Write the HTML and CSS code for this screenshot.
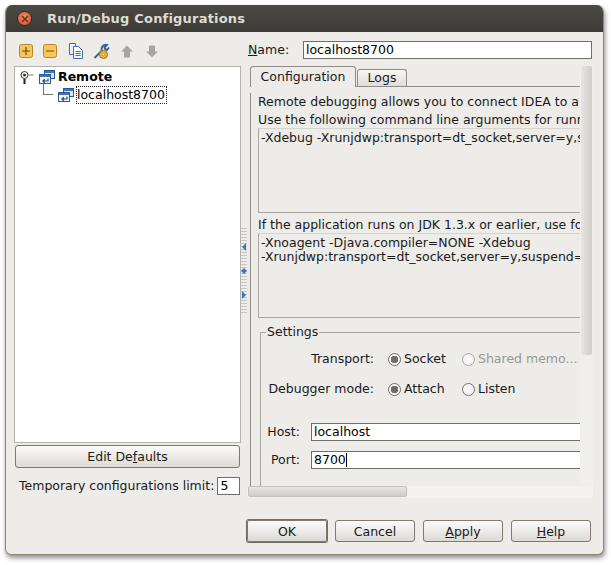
FILE: index.html
```html
<!DOCTYPE html>
<html lang="en">
<head>
    <meta charset="UTF-8">
    <title>Run/Debug Configurations</title>
    <link rel="stylesheet" href="styles.css">
</head>
<body>
    <svg class="defs" width="0" height="0">
        <symbol id="remoteIcon" viewBox="0 0 16 14">
            <rect x="5.5" y="0.5" width="10" height="8" fill="#dbe7f5" stroke="#2a5a94"/>
            <rect x="6" y="1" width="9" height="2" fill="#3f74b5"/>
            <rect x="0.5" y="4.5" width="11" height="9" fill="#f4f8fc" stroke="#2a5a94"/>
            <rect x="1" y="5" width="10" height="2" fill="#3f74b5"/>
            <path d="M9 8.500v2.500H4M5.800 9.200L3.800 11l2 1.800" fill="none" stroke="#1f4f8a" stroke-width="1.200"/>
        </symbol>
    </svg>

    <div class="window">
        <div class="titlebar">
            <span class="close-btn"><svg width="8" height="8" viewBox="0 0 8 8"><path d="M1 1l6 6M7 1l-6 6" stroke="#6b3020" stroke-width="1.500"/></svg></span>
            <span class="title">Run/Debug Configurations</span>
        </div>

        <div class="content">
            <div class="left-col">
                <div class="toolbar">
                    <svg width="14" height="14" viewBox="0 0 14 14"><rect x="0.500" y="0.500" width="13" height="13" rx="2" fill="#f6c65c" stroke="#b9852c"/><path d="M3 7h8M7 3v8" stroke="#6e4a10" stroke-width="1.200"/></svg>
                    <svg width="14" height="14" viewBox="0 0 14 14"><rect x="0.500" y="0.500" width="13" height="13" rx="2" fill="#f6c65c" stroke="#b9852c"/><path d="M3 7h8" stroke="#6e4a10" stroke-width="1.200"/></svg>
                    <svg class="tool-copy" width="14" height="16" viewBox="0 0 14 16"><path d="M0.500 0.500h6v11h-6z" fill="#e8f0f8" stroke="#3f6ea8"/><path d="M4.500 3.500h5l4 4v8h-9z" fill="#f7fafd" stroke="#3f6ea8"/><path d="M6.500 8.500h5M6.500 10.500h5M6.500 12.500h5" stroke="#3f6ea8"/></svg>
                    <svg width="17" height="17" viewBox="0 0 17 17"><path d="M1.500 15L9 7.500a4 4 0 0 1 5-5.500l-2.500 2.500.8 1.700 1.700.8L16 4.500" fill="none" stroke="#39659c" stroke-width="2"/><circle cx="10.500" cy="11.500" r="4" fill="#f1bb2e" stroke="#9c7313"/><circle cx="10.500" cy="11.500" r="1.300" fill="#fff6d0" stroke="#9c7313" stroke-width="0.600"/></svg>
                    <svg width="14" height="13" viewBox="0 0 14 13"><path d="M7 0.500L13 6.500H10V12.500H4V6.500H1z" fill="#a6a6a1"/></svg>
                    <svg class="tool-down" width="14" height="13" viewBox="0 0 14 13"><path d="M7 12.500L13 6.500H10V0.500H4V6.500H1z" fill="#a6a6a1"/></svg>
                </div>

                <div class="tree">
                    <div class="tree-row">
                        <svg class="pin" width="14" height="15" viewBox="0 0 14 15"><circle cx="4.500" cy="5" r="3.500" fill="#fff" stroke="#333"/><circle cx="4.500" cy="5" r="1.500" fill="#333"/><path d="M4.500 9v5" stroke="#222" stroke-width="2"/><path d="M9 5h4.500" stroke="#777"/></svg>
                        <svg class="node-icon" width="16" height="14"><use href="#remoteIcon"/></svg>
                        <b class="node-name">Remote</b>
                    </div>
                    <div class="tree-row child">
                        <span class="elbow"></span>
                        <svg class="node-icon" width="16" height="14"><use href="#remoteIcon"/></svg>
                        <span class="node-selected">localhost8700</span>
                    </div>
                </div>

                <button class="btn edit-defaults">Edit De<u>f</u>aults</button>

                <div class="limit-row">
                    <span class="limit-label">Temporary configurations limit:</span>
                    <span class="field limit-field">5</span>
                </div>
            </div>

            <div class="splitter">
                <span class="arrow-left"></span>
                <span class="arrow-both"><i class="arrow-left"></i><i class="arrow-right"></i></span>
                <span class="arrow-right"></span>
            </div>

            <div class="right-col">
                <div class="name-row">
                    <span class="name-label"><u>N</u>ame:</span>
                    <span class="field name-field">localhost8700</span>
                </div>

                <div class="scroll-pane">
                    <div class="viewport">
                        <div class="tabs">
                            <span class="tab active">Configuration</span>
                            <span class="tab">Logs</span>
                        </div>
                        <div class="tab-panel">
                            <p class="line first">Remote debugging allows you to connect IDEA to a</p>
                            <p class="line">Use the following command line arguments for runn</p>
                            <div class="args args-one">-Xdebug -Xrunjdwp:transport=dt_socket,server=y,s</div>
                            <p class="line second">If the application runs on JDK 1.3.x or earlier, use fo</p>
                            <div class="args args-two">-Xnoagent -Djava.compiler=NONE -Xdebug<br>-Xrunjdwp:transport=dt_socket,server=y,suspend=</div>

                            <div class="settings">
                                <span class="legend">Settings</span>
                                <div class="radio-row transport">
                                    <span class="radio-label">Transport:</span>
                                    <span class="radio on"></span><span class="radio-text socket">Socket</span>
                                    <span class="radio off"></span><span class="radio-text disabled">Shared memo...</span>
                                </div>
                                <div class="radio-row mode">
                                    <span class="radio-label">Debugger mode:</span>
                                    <span class="radio on"></span><span class="radio-text attach">Attach</span>
                                    <span class="radio"></span><span class="radio-text">Listen</span>
                                </div>
                                <div class="input-row host">
                                    <span class="input-label">Host:</span>
                                    <span class="field wide-field">localhost</span>
                                </div>
                                <div class="input-row">
                                    <span class="input-label">Port:</span>
                                    <span class="field wide-field">8700<i class="caret"></i></span>
                                </div>
                            </div>
                        </div>
                    </div>
                    <div class="vscroll"><span class="vthumb"></span></div>
                    <div class="hscroll"><span class="hthumb"></span></div>
                </div>
            </div>
        </div>

        <div class="footer">
            <button class="btn action default">OK</button>
            <button class="btn action">Cancel</button>
            <button class="btn action"><u>A</u>pply</button>
            <button class="btn action"><u>H</u>elp</button>
        </div>
    </div>
</body>
</html>
```

FILE: styles.css
```css
* {
    box-sizing: border-box;
}

body {
    margin: 0;
    padding: 5px 7px 10px 5px;
    background: #ffffff;
    color: #1a1a1a;
    font-family: "DejaVu Sans", sans-serif;
    font-size: 12.5px;
    line-height: 16px;
}

.defs {
    display: block;
    height: 0;
}

.window {
    display: flex;
    flex-direction: column;
    width: 599px;
    height: 550px;
    background: #edece9;
    border: 1px solid #8f8676;
    border-top: none;
    border-radius: 7px 7px 6px 6px;
    box-shadow: 1px 3px 5px rgba(0, 0, 0, 0.45);
    overflow: hidden;
}

.titlebar {
    display: flex;
    align-items: center;
    height: 27px;
    margin: 0 -1px;
    padding-left: 12px;
    background: linear-gradient(#4b4a45, #3c3b37);
    flex-shrink: 0;
}

.close-btn {
    display: flex;
    align-items: center;
    justify-content: center;
    width: 15px;
    height: 15px;
    border-radius: 50%;
    background: radial-gradient(circle at 50% 40%, #ef8a66, #d2522c);
    border: 1px solid #2c2b28;
}

.title {
    margin-left: 15px;
    color: #dfdbd2;
    font-weight: bold;
    font-size: 13px;
    letter-spacing: 0.2px;
}

.content {
    display: flex;
    height: 478px;
}

.left-col {
    width: 235px;
    padding-left: 8px;
    flex-shrink: 0;
}

.toolbar {
    display: flex;
    align-items: center;
    gap: 10px;
    height: 34px;
    padding: 4px 0 0 5px;
}

.toolbar svg {
    flex-shrink: 0;
}

.tool-copy {
    margin-left: 2px;
}

.tool-down {
    margin-left: 1px;
}

.tree {
    width: 227px;
    height: 377px;
    padding-top: 1px;
    background: #ffffff;
    border: 1px solid #b5b3ad;
}

.tree-row {
    display: flex;
    align-items: center;
    height: 18px;
    padding-left: 5px;
    color: #000000;
}

.pin {
    margin-right: 5px;
}

.node-icon {
    flex-shrink: 0;
}

.node-name {
    margin-left: 3px;
}

.child {
    padding-left: 29px;
    position: relative;
}

.elbow {
    position: absolute;
    left: 28px;
    top: -2px;
    width: 10px;
    height: 11px;
    border-left: 1px solid #77756f;
    border-bottom: 1px solid #77756f;
}

.child .node-icon {
    margin-left: 14px;
}

.node-selected {
    margin-left: 2px;
    padding: 0 2px 0 1px;
    line-height: 18px;
    outline: 1px dotted #222;
    outline-offset: -1px;
}

.btn {
    display: block;
    height: 23px;
    padding: 0;
    font: inherit;
    color: #1a1a1a;
    background: linear-gradient(#fbfbfa, #dcdad5);
    border: 1px solid #80796c;
    border-radius: 3px;
}

.edit-defaults {
    width: 225px;
    margin: 2px 0 0 1px;
}

.limit-row {
    display: flex;
    align-items: center;
    gap: 3px;
    height: 18px;
    margin-top: 9px;
    padding-left: 5px;
}

.limit-label {
    white-space: nowrap;
}

.field {
    display: block;
    height: 18px;
    padding-left: 2px;
    color: #000000;
    background: #ffffff;
    border: 1px solid #6f6d67;
    white-space: nowrap;
    line-height: 16px;
}

.limit-field {
    width: 23px;
    flex-shrink: 0;
}

.splitter {
    display: flex;
    flex-direction: column;
    align-items: center;
    width: 6px;
    height: 86px;
    margin-top: 196px;
    padding-top: 15px;
    gap: 16px;
    flex-shrink: 0;
    background: repeating-linear-gradient(#c9c7c1 0 1px, transparent 1px 3px);
}

.arrow-left,
.arrow-right {
    display: block;
    width: 0;
    height: 0;
    border-top: 4px solid transparent;
    border-bottom: 4px solid transparent;
}

.arrow-left {
    border-right: 4px solid #3f74c0;
}

.arrow-right {
    border-left: 4px solid #3f74c0;
}

.arrow-both {
    display: flex;
    align-items: center;
    height: 8px;
}

.arrow-both i {
    border-top-width: 3px;
    border-bottom-width: 3px;
    border-left-width: 3px;
    border-right-width: 3px;
}

.right-col {
    width: 357px;
    flex-shrink: 0;
}

.name-row {
    display: flex;
    align-items: center;
    height: 18px;
    margin-top: 9px;
    padding-left: 1px;
}

.name-label {
    width: 55px;
}

.name-field {
    width: 289px;
}

.scroll-pane {
    position: relative;
    width: 346px;
    height: 433px;
    margin-top: 7px;
}

.viewport {
    width: 330px;
    height: 420px;
    margin-left: 3px;
    overflow: hidden;
}

.tabs {
    display: flex;
    align-items: flex-end;
    height: 21px;
    padding-left: 0;
    border-bottom: 1px solid #8f8d87;
}

.tab {
    display: block;
    height: 17px;
    width: 50px;
    margin-left: 1px;
    text-align: center;
    background: linear-gradient(#f7f6f4, #dfddd8);
    border: 1px solid #8f8d87;
    border-bottom: none;
    border-radius: 3px 3px 0 0;
}

.tab.active {
    width: 106px;
    height: 21px;
    margin: 0 0 -1px 0;
    padding-top: 2px;
    background: #edece9;
}

.tab-panel {
    width: 400px;
    height: 420px;
    padding-left: 7px;
    border-left: 1px solid #8f8d87;
    white-space: nowrap;
}

.line {
    margin: 0;
    height: 18px;
    line-height: 18px;
}

.first {
    margin-top: 6px;
}

.args {
    padding: 2px;
    border: 1px solid #a9a7a1;
    border-top-color: #d5d3ce;
    border-right: none;
    overflow: hidden;
    line-height: 14px;
}

.args-one {
    height: 85px;
    margin-top: -1px;
}

.second {
    margin-top: 3px;
}

.args-two {
    height: 85px;
    margin-top: -1px;
}

.settings {
    position: relative;
    height: 170px;
    margin: 14px 0 0 2px;
    border: 1px solid #a9a7a1;
    border-right: none;
}

.legend {
    position: absolute;
    left: 5px;
    top: -9px;
    padding: 0 1px;
    background: #edece9;
}

.radio-row {
    display: flex;
    align-items: center;
    height: 18px;
}

.transport {
    margin-top: 17px;
}

.mode {
    margin-top: 12px;
}

.radio-label {
    width: 113px;
    margin-right: 14px;
    text-align: right;
}

.radio {
    display: block;
    width: 13px;
    height: 13px;
    margin-right: 3px;
    border: 1px solid #6f6d67;
    border-radius: 50%;
    background: #f7f6f4;
    flex-shrink: 0;
}

.radio.on {
    background: radial-gradient(circle, #6f6d67 0 3.5px, #f7f6f4 4px);
}

.radio.off {
    border-color: #a9a7a1;
}

.radio-text {
    white-space: nowrap;
}

.socket,
.attach {
    width: 58px;
}

.disabled {
    color: #9a9892;
}

.input-row {
    display: flex;
    align-items: center;
    margin-top: 10px;
}

.host {
    margin-top: 25px;
}

.input-label {
    width: 39px;
    margin-right: 11px;
    text-align: right;
}

.wide-field {
    width: 300px;
}

.caret {
    display: inline-block;
    width: 1px;
    height: 14px;
    background: #000000;
    vertical-align: -3px;
}

.vscroll {
    position: absolute;
    right: 0;
    top: 0;
    width: 13px;
    height: 420px;
    background: #f0efed;
}

.vthumb {
    display: block;
    width: 11px;
    height: 289px;
    margin: 0 auto;
    background: linear-gradient(90deg, #e8e6e2, #cfcdc8);
    border-radius: 2px;
}

.hscroll {
    position: absolute;
    left: 0;
    top: 420px;
    width: 346px;
    height: 12px;
    background: #f3f2f0;
}

.hthumb {
    display: block;
    width: 159px;
    height: 11px;
    margin-left: 1px;
    background: linear-gradient(#e8e6e2, #cfcdc8);
    border: 1px solid #c3c1bc;
    border-radius: 2px;
}

.footer {
    display: flex;
    gap: 8px;
    height: 45px;
    padding: 11px 0 0 241px;
}

.action {
    width: 80px;
    height: 22px;
    padding-top: 1px;
    flex-shrink: 0;
}

.default {
    box-shadow: 0 0 0 1px #6f6d67;
    border-radius: 2px;
}
```
